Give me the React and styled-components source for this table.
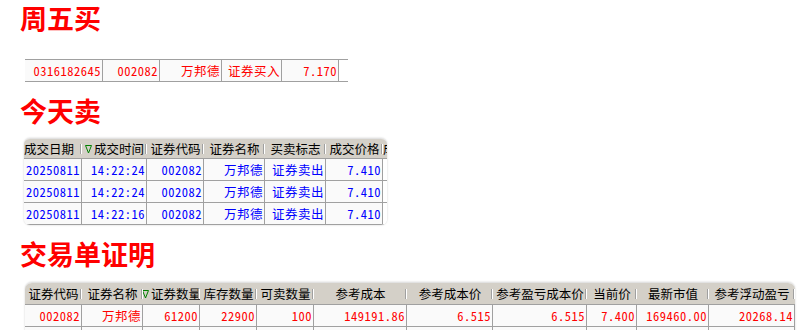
import React from 'react'
import styled, { createGlobalStyle } from 'styled-components'

const GlobalStyle = createGlobalStyle`
  body {
    margin: 0;
    background: #ffffff;
    font-family: "Noto Sans CJK SC", "Noto Sans", sans-serif;
  }
`

const Page = styled.div`
  width: 799px;
  height: 330px;
  overflow: hidden;
  box-sizing: border-box;
  padding: 0 0 0 20px;
`

const Title = styled.h1`
  margin: ${p => p.$mt}px 0 0;
  font-size: 27px;
  line-height: 36px;
  font-weight: 700;
  color: #ff0000;
`

const Table = styled.div`
  margin: ${p => p.$mt}px 0 0 ${p => p.$ml}px;
  width: ${p => p.$w}px;
  font-size: 12.5px;
  font-feature-settings: "hwid" 1;
  overflow: hidden;
  border-top: 1px solid ${p => (p.$plain ? '#a0a0a0' : '#e2e2e2')};
  border-radius: ${p => p.$radius || '0'};
  box-shadow: ${p => (p.$plain ? 'none' : '0 0 2px rgba(0, 0, 0, 0.22)')};
`

const Row = styled.div`
  display: grid;
  grid-template-columns: ${p => p.$cols};
  height: 22px;
  box-sizing: border-box;
  background: #fafafa;
  border-bottom: 1px solid #a0a0a0;
`

const HeadRow = styled(Row)`
  height: ${p => p.$h || 22}px;
  background: #d4d0c8;
`

const Cell = styled.div`
  border-right: ${p => (p.$stub ? 'none' : '1px solid #a0a0a0')};
  background: ${p => (p.$stub ? '#ffffff' : 'transparent')};
  color: ${p => p.$color};
  text-align: right;
  padding-right: 1px;
  letter-spacing: 0.5px;
  line-height: 21px;
  white-space: nowrap;
  overflow: hidden;
`

const HeadCell = styled.div`
  position: relative;
  display: flex;
  align-items: center;
  justify-content: ${p => (p.$left ? 'flex-start' : 'center')};
  gap: 2px;
  color: #000000;
  white-space: nowrap;
  overflow: hidden;

  &::after {
    content: '';
    position: absolute;
    right: 1px;
    top: 50%;
    margin-top: -5px;
    width: 1px;
    height: 10px;
    background: #a0a0a0;
    box-shadow: 1px 0 0 #ffffff;
    display: ${p => (p.$noBar ? 'none' : 'block')};
  }
`

const SortMark = () => (
  <svg width="7" height="10" viewBox="0 0 7 10" style={{ flex: 'none' }}>
    <path d="M0.5 1.5 H6.5 L3.5 9 Z" fill="none" stroke="#008000" strokeWidth="1" />
  </svg>
)

const buyCols = '78px 57px 62px 60px 57px 9px'
const buyRow = ['0316182645', '002082', '万邦德', '证券买入', '7.170']

const sellCols = '58px 65px 57px 61px 61px 57px 4px'
const sellHead = ['成交日期', '成交时间', '证券代码', '证券名称', '买卖标志', '成交价格', '成交数量']
const sellRows = [
  ['20250811', '14:22:24', '002082', '万邦德', '证券卖出', '7.410'],
  ['20250811', '14:22:24', '002082', '万邦德', '证券卖出', '7.410'],
  ['20250811', '14:22:16', '002082', '万邦德', '证券卖出', '7.410'],
]

const holdCols = '57px 61px 57px 57px 57px 93px 86px 94px 50px 72px 86px'
const holdHead = [
  '证券代码', '证券名称', '证券数量', '库存数量', '可卖数量', '参考成本',
  '参考成本价', '参考盈亏成本价', '当前价', '最新市值', '参考浮动盈亏',
]
const holdRows = [
  ['002082', '万邦德', '61200', '22900', '100', '149191.86', '6.515', '6.515', '7.400', '169460.00', '20268.14'],
  ['', '东方财富', '', '', '', '', '', '', '', '', ''],
]

const App = () => (
  <Page>
    <GlobalStyle />

    <Title $mt={0}>周五买</Title>
    <Table $mt={23} $ml={5} $w={323} $plain>
      <Row $cols={buyCols}>
        {buyRow.map((v, i) => (
          <Cell key={i} $color="#ff0000">{v}</Cell>
        ))}
        <Cell $stub />
      </Row>
    </Table>

    <Title $mt={11}>今天卖</Title>
    <Table $mt={9} $ml={4} $w={363} $radius="6px">
      <HeadRow $cols={sellCols} $h={20}>
        {sellHead.map((h, i) => (
          <HeadCell key={i} $left={i === 0 || i === 6} $noBar={i === 6}>
            {i === 1 && <SortMark />}
            {h}
          </HeadCell>
        ))}
      </HeadRow>
      {sellRows.map((r, ri) => (
        <Row key={ri} $cols={sellCols}>
          {r.map((v, i) => (
            <Cell key={i} $color="#0000ff">{v}</Cell>
          ))}
          <Cell $stub />
        </Row>
      ))}
    </Table>

    <Title $mt={11}>交易单证明</Title>
    <Table $mt={10} $ml={5} $w={770} $radius="7px 7px 0 0">
      <HeadRow $cols={holdCols}>
        {holdHead.map((h, i) => (
          <HeadCell key={i}>
            {i === 2 && <SortMark />}
            {h}
          </HeadCell>
        ))}
      </HeadRow>
      {holdRows.map((r, ri) => (
        <Row key={ri} $cols={holdCols}>
          {r.map((v, i) => (
            <Cell key={i} $color="#ff0000">{v}</Cell>
          ))}
        </Row>
      ))}
    </Table>
  </Page>
)

export default App
